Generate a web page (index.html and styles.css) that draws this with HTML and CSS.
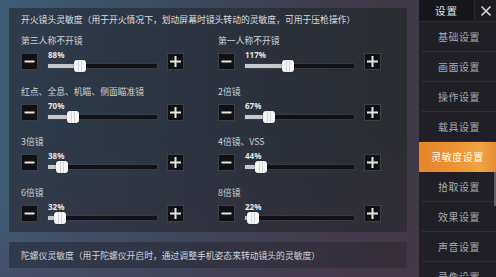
FILE: index.html
```html
<!DOCTYPE html>
<html lang="zh-CN">
<head>
<meta charset="utf-8">
<title>灵敏度设置</title>
<link rel="stylesheet" href="styles.css">
</head>
<body>
<div class="screen">
  <main class="main">
    <section class="panel panel-fire">
      <h1 class="title">开火镜头灵敏度（用于开火情况下，划动屏幕时镜头转动的灵敏度，可用于压枪操作）</h1>
      <div class="grid">
        <div class="item">
          <div class="label">第三人称不开镜</div>
          <div class="ctrl">
            <span class="btn"><svg width="15" height="15" viewBox="0 0 15 15"><rect x="2.5" y="6.5" width="10" height="2" fill="#e6e6e6"/></svg></span>
            <div class="slider"><div class="pct">88%</div><div class="track"><div class="fill" style="width:29.3%"><span class="thumb"></span></div></div></div>
            <span class="btn"><svg width="15" height="15" viewBox="0 0 15 15"><rect x="2" y="6.5" width="11" height="2" fill="#e6e6e6"/><rect x="6.5" y="2" width="2" height="11" fill="#e6e6e6"/></svg></span>
          </div>
        </div>
        <div class="item">
          <div class="label">第一人称不开镜</div>
          <div class="ctrl">
            <span class="btn"><svg width="15" height="15" viewBox="0 0 15 15"><rect x="2.5" y="6.5" width="10" height="2" fill="#e6e6e6"/></svg></span>
            <div class="slider"><div class="pct">117%</div><div class="track"><div class="fill" style="width:39%"><span class="thumb"></span></div></div></div>
            <span class="btn"><svg width="15" height="15" viewBox="0 0 15 15"><rect x="2" y="6.5" width="11" height="2" fill="#e6e6e6"/><rect x="6.5" y="2" width="2" height="11" fill="#e6e6e6"/></svg></span>
          </div>
        </div>
        <div class="item">
          <div class="label">红点、全息、机瞄、侧面瞄准镜</div>
          <div class="ctrl">
            <span class="btn"><svg width="15" height="15" viewBox="0 0 15 15"><rect x="2.5" y="6.5" width="10" height="2" fill="#e6e6e6"/></svg></span>
            <div class="slider"><div class="pct">70%</div><div class="track"><div class="fill" style="width:23.3%"><span class="thumb"></span></div></div></div>
            <span class="btn"><svg width="15" height="15" viewBox="0 0 15 15"><rect x="2" y="6.5" width="11" height="2" fill="#e6e6e6"/><rect x="6.5" y="2" width="2" height="11" fill="#e6e6e6"/></svg></span>
          </div>
        </div>
        <div class="item">
          <div class="label">2倍镜</div>
          <div class="ctrl">
            <span class="btn"><svg width="15" height="15" viewBox="0 0 15 15"><rect x="2.5" y="6.5" width="10" height="2" fill="#e6e6e6"/></svg></span>
            <div class="slider"><div class="pct">67%</div><div class="track"><div class="fill" style="width:22.3%"><span class="thumb"></span></div></div></div>
            <span class="btn"><svg width="15" height="15" viewBox="0 0 15 15"><rect x="2" y="6.5" width="11" height="2" fill="#e6e6e6"/><rect x="6.5" y="2" width="2" height="11" fill="#e6e6e6"/></svg></span>
          </div>
        </div>
        <div class="item">
          <div class="label">3倍镜</div>
          <div class="ctrl">
            <span class="btn"><svg width="15" height="15" viewBox="0 0 15 15"><rect x="2.5" y="6.5" width="10" height="2" fill="#e6e6e6"/></svg></span>
            <div class="slider"><div class="pct">38%</div><div class="track"><div class="fill" style="width:12.7%"><span class="thumb"></span></div></div></div>
            <span class="btn"><svg width="15" height="15" viewBox="0 0 15 15"><rect x="2" y="6.5" width="11" height="2" fill="#e6e6e6"/><rect x="6.5" y="2" width="2" height="11" fill="#e6e6e6"/></svg></span>
          </div>
        </div>
        <div class="item">
          <div class="label">4倍镜、VSS</div>
          <div class="ctrl">
            <span class="btn"><svg width="15" height="15" viewBox="0 0 15 15"><rect x="2.5" y="6.5" width="10" height="2" fill="#e6e6e6"/></svg></span>
            <div class="slider"><div class="pct">44%</div><div class="track"><div class="fill" style="width:14.7%"><span class="thumb"></span></div></div></div>
            <span class="btn"><svg width="15" height="15" viewBox="0 0 15 15"><rect x="2" y="6.5" width="11" height="2" fill="#e6e6e6"/><rect x="6.5" y="2" width="2" height="11" fill="#e6e6e6"/></svg></span>
          </div>
        </div>
        <div class="item">
          <div class="label">6倍镜</div>
          <div class="ctrl">
            <span class="btn"><svg width="15" height="15" viewBox="0 0 15 15"><rect x="2.5" y="6.5" width="10" height="2" fill="#e6e6e6"/></svg></span>
            <div class="slider"><div class="pct">32%</div><div class="track"><div class="fill" style="width:10.7%"><span class="thumb"></span></div></div></div>
            <span class="btn"><svg width="15" height="15" viewBox="0 0 15 15"><rect x="2" y="6.5" width="11" height="2" fill="#e6e6e6"/><rect x="6.5" y="2" width="2" height="11" fill="#e6e6e6"/></svg></span>
          </div>
        </div>
        <div class="item">
          <div class="label">8倍镜</div>
          <div class="ctrl">
            <span class="btn"><svg width="15" height="15" viewBox="0 0 15 15"><rect x="2.5" y="6.5" width="10" height="2" fill="#e6e6e6"/></svg></span>
            <div class="slider"><div class="pct">22%</div><div class="track"><div class="fill" style="width:7.3%"><span class="thumb"></span></div></div></div>
            <span class="btn"><svg width="15" height="15" viewBox="0 0 15 15"><rect x="2" y="6.5" width="11" height="2" fill="#e6e6e6"/><rect x="6.5" y="2" width="2" height="11" fill="#e6e6e6"/></svg></span>
          </div>
        </div>
      </div>
    </section>
    <section class="panel panel-gyro">陀螺仪灵敏度（用于陀螺仪开启时，通过调整手机姿态来转动镜头的灵敏度）</section>
  </main>
  <nav class="side">
    <div class="side-head">
      <div class="head-title">设置</div>
      <div class="head-close"><svg width="12" height="12" viewBox="0 0 12 12"><path d="M1.5 1.5 L10.5 10.5 M10.5 1.5 L1.5 10.5" stroke="#d8d8dc" stroke-width="1.6" fill="none"/></svg></div>
    </div>
    <div class="menu-item">基础设置</div>
    <div class="menu-item">画面设置</div>
    <div class="menu-item">操作设置</div>
    <div class="menu-item">载具设置</div>
    <div class="menu-item active">灵敏度设置</div>
    <div class="menu-item">拾取设置</div>
    <div class="menu-item">效果设置</div>
    <div class="menu-item">声音设置</div>
    <div class="menu-item">录像设置</div>
    <span class="scroll-thumb"></span>
  </nav>
</div>
</body>
</html>
```
FILE: styles.css
```css
html, body {
  margin: 0;
  padding: 0;
}
html {
  overflow: hidden;
}
body {
  width: 496px;
  height: 277px;
  overflow: hidden;
  font-family: "Noto Sans CJK SC", "Noto Sans", sans-serif;
  background:
    linear-gradient(180deg, rgba(0,0,0,0) 70%, rgba(80,55,75,0.35) 100%),
    linear-gradient(90deg, #3f5e77 0%, #3b4b5e 35%, #413a4a 70%, #3e3742 100%);
}
.screen {
  display: flex;
  height: 277px;
  overflow: hidden;
}
.main {
  width: 398px;
  padding: 8px 0 0 9px;
  display: flex;
  flex-direction: column;
  gap: 10px;
}
.panel {
  box-sizing: border-box;
  background:
    linear-gradient(180deg, rgba(0,0,0,0) 55%, rgba(70,50,70,0.22) 100%),
    linear-gradient(90deg, #2e3c4b 0%, #2c3440 45%, #2a2b31 100%);
}
.panel-fire {
  height: 224px;
  padding: 5px 0 0 12px;
}
.title {
  margin: 0;
  font-size: 8.8px;
  font-weight: normal;
  line-height: 14px;
  color: #dadee2;
  white-space: nowrap;
}
.grid {
  display: grid;
  grid-template-columns: 163px 163px;
  column-gap: 34px;
  row-gap: 14.5px;
  margin-top: 7px;
}
.label {
  font-size: 8.8px;
  line-height: 14px;
  height: 14px;
  color: #cdd1d7;
  white-space: nowrap;
}
.ctrl {
  display: flex;
  gap: 10px;
  height: 17px;
  margin-top: 5px;
}
.btn {
  box-sizing: border-box;
  width: 17px;
  height: 17px;
  flex: none;
  background: #111114;
  border: 1px solid #3a404a;
  display: flex;
  align-items: center;
  justify-content: center;
}
.btn svg {
  display: block;
}
.slider {
  width: 109px;
  flex: none;
}
.pct {
  margin-top: -3px;
  height: 9px;
  line-height: 9px;
  font-family: "Noto Sans", sans-serif;
  font-size: 8px;
  font-weight: bold;
  color: #e4e6ea;
}
.track {
  position: relative;
  margin-top: 5px;
  height: 4px;
  background: #121216;
  box-shadow: 0 0 0 1px rgba(70,75,85,0.35);
}
.fill {
  position: relative;
  height: 4px;
  background: #c6c8cc;
}
.thumb {
  position: absolute;
  right: -6px;
  top: -4px;
  width: 12px;
  height: 12px;
  border-radius: 3px;
  background:
    linear-gradient(90deg, transparent 4px, #d4d4d6 4px, #d4d4d6 5px, transparent 5px, transparent 7px, #d4d4d6 7px, #d4d4d6 8px, transparent 8px),
    #f6f6f6;
  box-shadow: 0 0 2px rgba(0,0,0,0.4);
}
.panel-gyro {
  height: 26px;
  padding-left: 12px;
  font-size: 8.8px;
  line-height: 27px;
  color: #d0d4da;
  white-space: nowrap;
  background: linear-gradient(90deg, #2f3b4c 0%, #333443 50%, #372f3a 100%);
}
.side {
  position: relative;
  width: 77px;
  height: 277px;
  overflow: hidden;
  margin-left: 12px;
  background: #1f1f25;
  display: flex;
  flex-direction: column;
}
.side-head {
  height: 22px;
  flex: none;
  display: flex;
  box-sizing: border-box;
  border-bottom: 1px solid #2c2c33;
}
.head-title {
  width: 55px;
  background: #17171b;
  color: #e2e2e6;
  font-size: 10.5px;
  letter-spacing: 1px;
  text-align: center;
  line-height: 21px;
}
.head-close {
  flex: 1;
  display: flex;
  align-items: center;
  justify-content: center;
  border-left: 1px solid #2a2a31;
  background: #1c1c21;
}
.menu-item {
  height: 30px;
  flex: none;
  box-sizing: border-box;
  border-bottom: 1px solid #2f2f37;
  margin-left: 3px;
  font-size: 10px;
  letter-spacing: 0.5px;
  line-height: 29px;
  text-align: center;
  color: #a8aab1;
}
.menu-item.active {
  margin-left: 0;
  border-bottom: none;
  color: #ffffff;
  background: linear-gradient(90deg, #e6842a 0%, #ee9634 55%, #f0a444 80%, #e48c34 100%);
}
.scroll-thumb {
  position: absolute;
  right: 0;
  top: 172px;
  width: 2px;
  height: 34px;
  background: #5e5e66;
}
```
